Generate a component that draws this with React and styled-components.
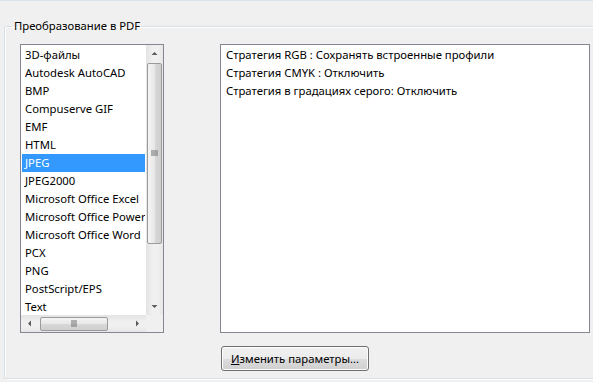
import styled, { createGlobalStyle } from 'styled-components';

const GlobalStyle = createGlobalStyle`
  html, body {
    margin: 0;
    padding: 0;
    background: #f0f0f0;
  }
  body {
    font-family: 'Noto Sans', 'Open Sans', sans-serif;
    font-size: 11.3px;
    color: #000;
  }
`;

const formats = [
  '3D-файлы',
  'Autodesk AutoCAD',
  'BMP',
  'Compuserve GIF',
  'EMF',
  'HTML',
  'JPEG',
  'JPEG2000',
  'Microsoft Office Excel',
  'Microsoft Office PowerPoint',
  'Microsoft Office Word',
  'PCX',
  'PNG',
  'PostScript/EPS',
  'Text',
];

const settings = [
  'Стратегия RGB : Сохранять встроенные профили',
  'Стратегия CMYK : Отключить',
  'Стратегия в градациях серого: Отключить',
];

const Page = styled.div`
  width: 593px;
  height: 382px;
  overflow: hidden;
  box-sizing: border-box;
  border-top: 1px solid #dae3ec;
  padding-left: 4px;
`;

const Group = styled.fieldset`
  width: 620px;
  height: 361px;
  box-sizing: border-box;
  margin: 17px 0 0 0;
  padding: 0;
  border: 1px solid #d5dfe5;
  border-radius: 2px;
  box-shadow: inset 1px 1px 0 #fff, 1px 1px 0 #fff;
  min-inline-size: 0;
`;

const Legend = styled.legend`
  margin-left: 7px;
  padding: 0 2px;
  line-height: 16px;
`;

const Content = styled.div`
  padding: 10px 0 0 15px;
  display: flex;
  flex-direction: column;
  align-items: flex-start;
`;

const Row = styled.div`
  display: flex;
  gap: 56px;
  align-items: flex-start;
`;

const ListBox = styled.div`
  width: 144px;
  height: 289px;
  box-sizing: border-box;
  border: 1px solid #828790;
  background: #fff;
  display: grid;
  grid-template-columns: 1fr 17px;
  grid-template-rows: 1fr 17px;
`;

const Items = styled.div`
  padding: 1px;
  overflow: hidden;
  min-width: 0;
`;

const Item = styled.div`
  height: 18px;
  line-height: 18px;
  padding-left: 3px;
  white-space: nowrap;
  overflow: hidden;
  background: ${(p) => (p.$selected ? '#3399ff' : 'transparent')};
  color: ${(p) => (p.$selected ? '#fff' : '#000')};
`;

const VScroll = styled.div`
  display: flex;
  flex-direction: column;
  background: linear-gradient(to right, #e3e3e3, #f0f0f0 40%, #f0f0f0 70%, #e6e6e6);
`;

const HScroll = styled.div`
  display: flex;
  background: linear-gradient(to bottom, #e3e3e3, #f0f0f0 40%, #f0f0f0 70%, #e6e6e6);
`;

const Corner = styled.div`
  background: #f0f0f0;
`;

const Arrow = styled.div`
  width: 17px;
  height: 17px;
  flex: none;
  display: flex;
  align-items: center;
  justify-content: center;
`;

const Thumb = styled.div`
  box-sizing: border-box;
  border: 1px solid #9b9b9b;
  border-radius: 2px;
  display: flex;
  align-items: center;
  justify-content: center;
  flex: none;
  background: ${(p) =>
    p.$horizontal
      ? 'linear-gradient(to bottom, #f4f4f4, #e8e8e8 50%, #d8d8d8 51%, #cfcfcf)'
      : 'linear-gradient(to right, #f4f4f4, #e8e8e8 50%, #d8d8d8 51%, #cfcfcf)'};
  margin: ${(p) => (p.$horizontal ? '0 0 0 2px' : '1px 1px 0 1px')};
  width: ${(p) => (p.$horizontal ? '68px' : 'auto')};
  height: ${(p) => (p.$horizontal ? '14px' : '181px')};
  align-self: ${(p) => (p.$horizontal ? 'center' : 'stretch')};
`;

const Spacer = styled.div`
  flex: 1;
`;

const Panel = styled.div`
  width: 370px;
  height: 289px;
  box-sizing: border-box;
  border: 1px solid #828790;
  background: #fff;
  padding: 1px 5px;
`;

const Line = styled.div`
  line-height: 18px;
  white-space: nowrap;
`;

const Actions = styled.div`
  padding-left: 201px;
  margin-top: 13px;
`;

const Button = styled.button`
  width: 148px;
  height: 25px;
  box-sizing: border-box;
  border: 1px solid #707070;
  border-radius: 3px;
  background: linear-gradient(to bottom, #f2f2f2, #ebebeb 50%, #dddddd 51%, #cfcfcf);
  font: inherit;
  color: #000;
  padding: 0 0 1px 0;
  box-shadow: inset 0 0 0 1px #fcfcfc;
`;

const Tri = ({ dir }) => {
  const pts = {
    up: '0.5,4 3.5,1 6.5,4',
    down: '0.5,1 3.5,4 6.5,1',
    left: '4,0.5 1,3.5 4,6.5',
    right: '1,0.5 4,3.5 1,6.5',
  }[dir];
  const vertical = dir === 'up' || dir === 'down';
  return (
    <svg width={vertical ? 7 : 5} height={vertical ? 5 : 7} viewBox={vertical ? '0 0 7 5' : '0 0 5 7'}>
      <polygon points={pts} fill='#5a5a5a' />
    </svg>
  );
};

const Grip = ({ horizontal }) => (
  <svg width='7' height='7' viewBox='0 0 7 7'>
    {horizontal
      ? [0, 2, 4].map((x) => <rect key={x} x={x + 0.5} y='0' width='1' height='7' fill='#6f6f6f' />)
      : [0, 2, 4].map((y) => <rect key={y} x='0' y={y + 0.5} width='7' height='1' fill='#6f6f6f' />)}
  </svg>
);

export default function App() {
  return (
    <>
      <GlobalStyle />
      <Page>
        <Group>
          <Legend>Преобразование в PDF</Legend>
          <Content>
            <Row>
              <ListBox>
                <Items>
                  {formats.map((f) => (
                    <Item key={f} $selected={f === 'JPEG'}>
                      {f}
                    </Item>
                  ))}
                </Items>
                <VScroll>
                  <Arrow>
                    <Tri dir='up' />
                  </Arrow>
                  <Thumb>
                    <Grip />
                  </Thumb>
                  <Spacer />
                  <Arrow>
                    <Tri dir='down' />
                  </Arrow>
                </VScroll>
                <HScroll>
                  <Arrow>
                    <Tri dir='left' />
                  </Arrow>
                  <Thumb $horizontal>
                    <Grip horizontal />
                  </Thumb>
                  <Spacer />
                  <Arrow>
                    <Tri dir='right' />
                  </Arrow>
                </HScroll>
                <Corner />
              </ListBox>
              <Panel>
                {settings.map((s) => (
                  <Line key={s}>{s}</Line>
                ))}
              </Panel>
            </Row>
            <Actions>
              <Button>
                <u>И</u>зменить параметры...
              </Button>
            </Actions>
          </Content>
        </Group>
      </Page>
    </>
  );
}
